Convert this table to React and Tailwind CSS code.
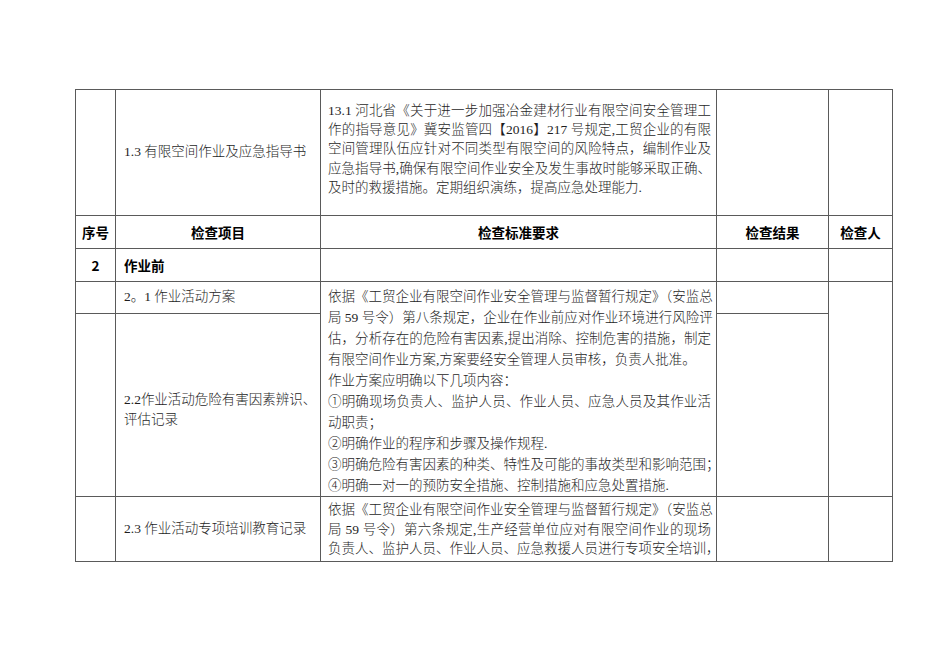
import React from "react";

const Line = ({ children, full }) => (
  <div className={full ? "whitespace-nowrap text-justify [text-align-last:justify]" : "whitespace-nowrap text-left"}>
    {children}
  </div>
);

const td = "border border-[#5a5a5a] p-0";

export default function App() {
  return (
    <div className="min-h-[672px] w-[950px] bg-white pt-[89px] pl-[75px] [font-family:'Liberation_Serif','Noto_Sans_CJK_SC',serif] text-[13.5px] font-light text-[#1e1e1e]">
      <table className="table-fixed border-collapse w-[817px]">
        <colgroup>
          <col className="w-[40px]" />
          <col className="w-[205px]" />
          <col className="w-[396px]" />
          <col className="w-[112px]" />
          <col className="w-[64px]" />
        </colgroup>
        <tbody>
          <tr className="h-[126px]">
            <td className={td}></td>
            <td className={`${td} align-middle pl-[8px] whitespace-nowrap`}>1.3 有限空间作业及应急指导书</td>
            <td className={`${td} align-top pl-[7px] pr-[5px] pt-[11px] leading-[19.2px]`}>
              <Line full>13.1 河北省《关于进一步加强冶金建材行业有限空间安全管理工</Line>
              <Line full>作的指导意见》冀安监管四【2016】217 号规定,工贸企业的有限</Line>
              <Line full>空间管理队伍应针对不同类型有限空间的风险特点，编制作业及</Line>
              <Line full>应急指导书,确保有限空间作业安全及发生事故时能够采取正确、</Line>
              <Line>及时的救援措施。定期组织演练，提高应急处理能力.</Line>
            </td>
            <td className={td}></td>
            <td className={td}></td>
          </tr>
          <tr className="h-[33px] font-bold text-black [font-family:'Noto_Sans_CJK_SC',sans-serif]">
            <td className={`${td} text-center`}>序号</td>
            <td className={`${td} text-center`}>检查项目</td>
            <td className={`${td} text-center`}>检查标准要求</td>
            <td className={`${td} text-center`}>检查结果</td>
            <td className={`${td} text-center`}>检查人</td>
          </tr>
          <tr className="h-[33px]">
            <td className={`${td} text-center font-bold text-black [font-family:'Noto_Sans_CJK_SC',sans-serif]`}>2</td>
            <td className={`${td} pl-[8px] font-bold text-black [font-family:'Noto_Sans_CJK_SC',sans-serif]`}>作业前</td>
            <td className={td}></td>
            <td className={td}></td>
            <td className={td}></td>
          </tr>
          <tr className="h-[32px]">
            <td className={td}></td>
            <td className={`${td} pl-[8px] whitespace-nowrap`}>2。1 作业活动方案</td>
            <td rowSpan={2} className={`${td} align-top pl-[7px] pr-[5px] pt-[4px] leading-[21px]`}>
              <Line full>依据《工贸企业有限空间作业安全管理与监督暂行规定》（安监总</Line>
              <Line full>局 59 号令）第八条规定，企业在作业前应对作业环境进行风险评</Line>
              <Line full>估，分析存在的危险有害因素,提出消除、控制危害的措施，制定</Line>
              <Line>有限空间作业方案,方案要经安全管理人员审核，负责人批准。</Line>
              <Line>作业方案应明确以下几项内容：</Line>
              <Line full>①明确现场负责人、监护人员、作业人员、应急人员及其作业活</Line>
              <Line>动职责；</Line>
              <Line>②明确作业的程序和步骤及操作规程.</Line>
              <Line full>③明确危险有害因素的种类、特性及可能的事故类型和影响范围；</Line>
              <Line>④明确一对一的预防安全措施、控制措施和应急处置措施.</Line>
            </td>
            <td className={td}></td>
            <td rowSpan={2} className={td}></td>
          </tr>
          <tr className="h-[182px]">
            <td className={td}></td>
            <td className={`${td} align-middle pl-[8px] pt-[10px] leading-[20px]`}>
              <div className="whitespace-nowrap">2.2作业活动危险有害因素辨识、</div>
              <div className="whitespace-nowrap">评估记录</div>
            </td>
            <td className={td}></td>
          </tr>
          <tr className="h-[65px]">
            <td className={td}></td>
            <td className={`${td} align-middle pl-[8px] whitespace-nowrap`}>2.3 作业活动专项培训教育记录</td>
            <td className={`${td} align-top pl-[7px] pr-[5px] pt-[3px] leading-[19.5px]`}>
              <Line full>依据《工贸企业有限空间作业安全管理与监督暂行规定》（安监总</Line>
              <Line full>局 59 号令）第六条规定,生产经营单位应对有限空间作业的现场</Line>
              <Line full>负责人、监护人员、作业人员、应急救援人员进行专项安全培训，</Line>
            </td>
            <td className={td}></td>
            <td className={td}></td>
          </tr>
        </tbody>
      </table>
    </div>
  );
}
